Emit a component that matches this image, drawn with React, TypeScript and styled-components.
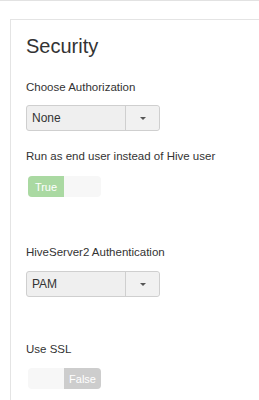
import styled, {createGlobalStyle} from 'styled-components';

const GlobalStyle = createGlobalStyle`
	body {
		margin: 0;
		background: #fff;
		font-family: "Liberation Sans", Arial, sans-serif;
		color: #333;
	}
`;

const Page = styled.div`
	width: 259px;
	height: 400px;
	overflow: hidden;
	border-top: 1px solid #e2e2e2;
	box-sizing: border-box;
`;

const Panel = styled.section`
	margin: 18px 0 0 10px;
	border: 1px solid #e4e4e4;
	border-right: none;
	padding: 15px 0 40px 15px;
	display: flex;
	flex-direction: column;
	align-items: flex-start;
`;

const Title = styled.h2`
	margin: 0;
	font-size: 20px;
	font-weight: normal;
	line-height: 23px;
`;

const Field = styled.div<{$gap: number}>`
	display: flex;
	flex-direction: column;
	align-items: flex-start;
	margin-top: ${p => p.$gap}px;
`;

const Label = styled.label<{$space: number}>`
	font-size: 11.5px;
	line-height: 16px;
	margin-bottom: ${p => p.$space}px;
`;

const Select = styled.div`
	display: flex;
	width: 134px;
	height: 26px;
	box-sizing: border-box;
	border: 1px solid #cfcfcf;
	border-radius: 3px;
	background: #efefef;
	font-size: 12px;
`;

const SelectValue = styled.span`
	width: 99px;
	padding-left: 5px;
	box-sizing: border-box;
	border-right: 1px solid #cfcfcf;
	display: flex;
	align-items: center;
`;

const SelectButton = styled.span`
	flex: 1;
	display: flex;
	align-items: center;
	justify-content: center;
	background: #f1f1f1;
	border-radius: 0 3px 3px 0;

	&::after {
		content: '';
		margin-top: 1px;
		border-top: 3px solid #555;
		border-left: 3px solid transparent;
		border-right: 3px solid transparent;
	}
`;

const Switch = styled.div`
	display: flex;
	width: 73px;
	height: 21px;
	margin-left: 2px;
	border-radius: 4px;
	overflow: hidden;
	background: #f7f7f7;
`;

const SwitchPart = styled.span<{$on?: boolean; $color?: string}>`
	width: ${p => (p.$on ? 36 : 37)}px;
	display: flex;
	align-items: center;
	justify-content: center;
	font-size: 11px;
	color: #fff;
	background: ${p => p.$color ?? 'transparent'};
`;

export default function App() {
	return (
		<>
			<GlobalStyle />
			<Page>
				<Panel>
					<Title>Security</Title>

					<Field $gap={21}>
						<Label $space={10}>Choose Authorization</Label>
						<Select>
							<SelectValue>None</SelectValue>
							<SelectButton />
						</Select>
					</Field>

					<Field $gap={17}>
						<Label $space={12}>Run as end user instead of Hive user</Label>
						<Switch>
							<SwitchPart $on $color="#aad9a2">True</SwitchPart>
							<SwitchPart />
						</Switch>
					</Field>

					<Field $gap={47}>
						<Label $space={11}>HiveServer2 Authentication</Label>
						<Select>
							<SelectValue>PAM</SelectValue>
							<SelectButton />
						</Select>
					</Field>

					<Field $gap={44}>
						<Label $space={11}>Use SSL</Label>
						<Switch>
							<SwitchPart $on />
							<SwitchPart $color="#cdcdcd">False</SwitchPart>
						</Switch>
					</Field>
				</Panel>
			</Page>
		</>
	);
}
